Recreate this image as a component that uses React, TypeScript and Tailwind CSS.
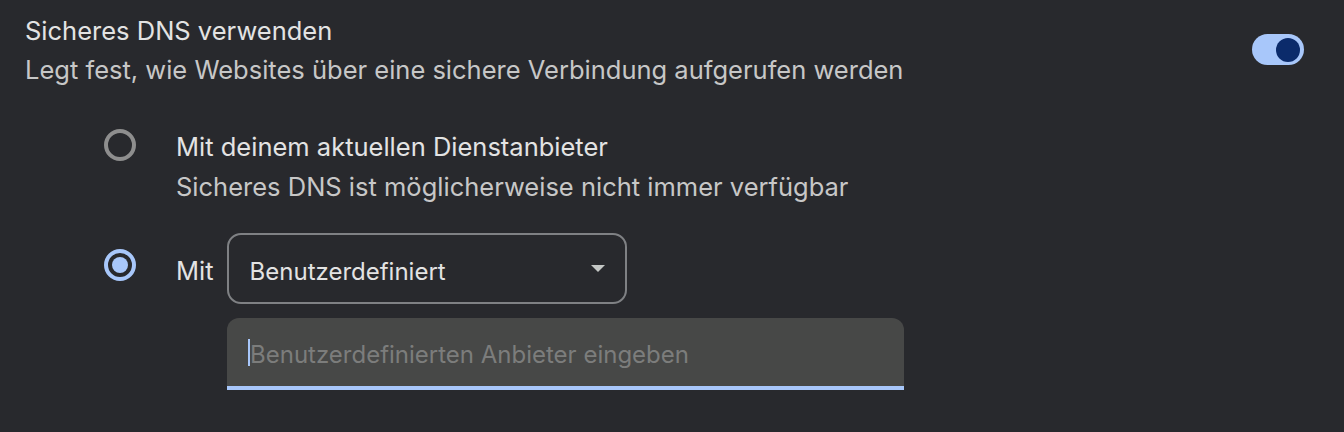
const Toggle = () => (
  <div className="mt-[34px] mr-[40px] flex h-[31px] w-[52px] items-center justify-end rounded-full bg-[#a8c7fa] pr-[4px]">
    <div className="h-[24px] w-[24px] rounded-full bg-[#0b2b6b]" />
  </div>
);

const Radio = ({ checked }: { checked?: boolean }) =>
  checked ? (
    <div className="flex h-[32px] w-[32px] shrink-0 items-center justify-center rounded-full border-[4px] border-[#a8c7fa]">
      <div className="h-[16px] w-[16px] rounded-full bg-[#a8c7fa]" />
    </div>
  ) : (
    <div className="h-[32px] w-[32px] shrink-0 rounded-full border-[4px] border-[#8e8e8e]" />
  );

export default function App() {
  return (
    <div
      className="h-[432px] w-[1344px] overflow-hidden bg-[#28292d] pl-[25px] text-[25.5px]"
      style={{ fontFamily: "Inter, Roboto, sans-serif" }}
    >
      <div className="flex justify-between">
        <div className="pt-[11px] leading-[39px]">
          <div className="text-[#e3e3e3]">Sicheres DNS verwenden</div>
          <div className="text-[#c7c7c7]">
            Legt fest, wie Websites über eine sichere Verbindung aufgerufen werden
          </div>
        </div>
        <Toggle />
      </div>

      <div className="ml-[79px] mt-[38px] flex gap-[40px]">
        <div className="mt-[2px]">
          <Radio />
        </div>
        <div className="leading-[40px]">
          <div className="text-[#e3e3e3]">Mit deinem aktuellen Dienstanbieter</div>
          <div className="text-[#c7c7c7]">Sicheres DNS ist möglicherweise nicht immer verfügbar</div>
        </div>
      </div>

      <div className="ml-[79px] mt-[26px] flex items-center gap-[40px]">
        <div className="mb-[7px]">
          <Radio checked />
        </div>
        <div className="flex items-center gap-[13px]">
          <span className="mt-[6px] text-[#e3e3e3]">Mit</span>
          <div className="flex h-[71px] w-[400px] items-center justify-between rounded-[14px] border-2 border-[#7f8184] pl-[21px] pr-[20px]">
            <span className="mt-[6px] text-[24px] text-[#e3e3e3]">Benutzerdefiniert</span>
            <div className="h-0 w-0 border-x-[7px] border-t-[7px] border-x-transparent border-t-[#c4c7c5]" />
          </div>
        </div>
      </div>

      <div className="ml-[202px] mt-[14px] flex h-[72px] w-[677px] items-center rounded-t-[12px] border-b-4 border-[#a8c7fa] bg-[#474847] pl-[21px]">
        <div className="h-[27px] w-[2px] bg-[#a8c7fa]" />
        <span className="mt-[6px] text-[24px] text-[#7c7d7c]">Benutzerdefinierten Anbieter eingeben</span>
      </div>
    </div>
  );
}
